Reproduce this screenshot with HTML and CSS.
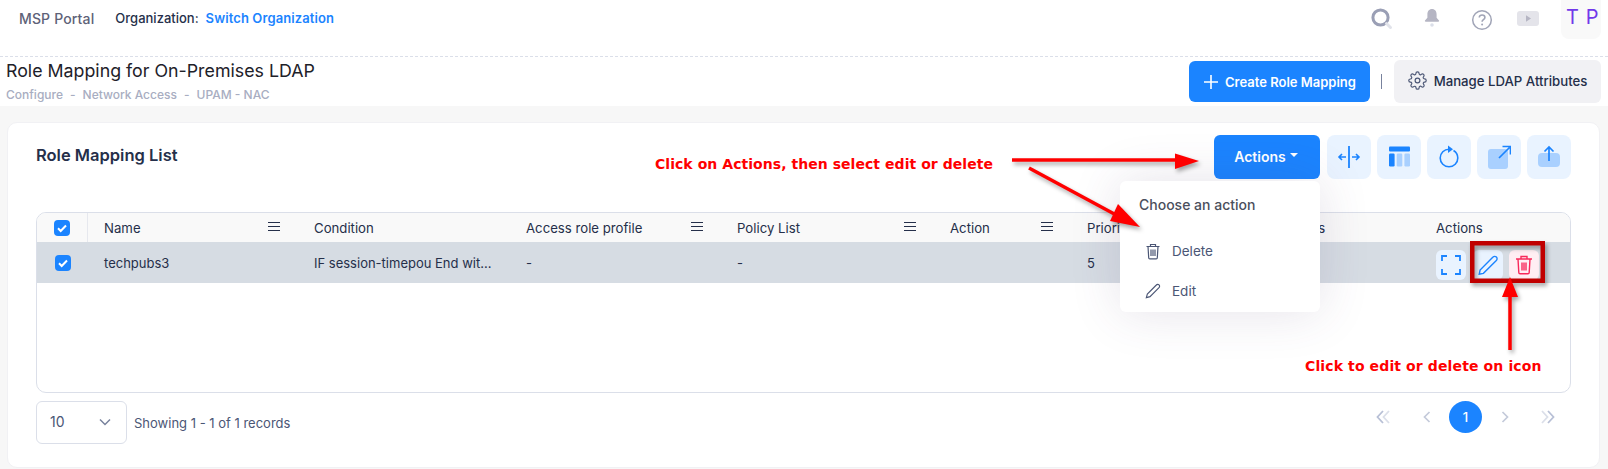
FILE: index.html
```html
<!DOCTYPE html>
<html lang="en">
<head>
<meta charset="utf-8">
<title>Role Mapping for On-Premises LDAP</title>
<link rel="stylesheet" href="styles.css">
</head>
<body>
<div class="page">
  <header class="topbar">
    <div class="topbar-left">
      <span class="brand">MSP Portal</span>
      <span class="org-label">Organization:</span>
      <a class="org-link">Switch Organization</a>
    </div>
    <div class="topbar-right">
      <svg class="ic-search" viewBox="0 0 24 24" width="24" height="24"><circle cx="10.5" cy="10.5" r="7.6" fill="none" stroke="#9a9fb5" stroke-width="3"/><path d="M16.5 16.5l4 4" stroke="#e1e3ea" stroke-width="3" stroke-linecap="round"/></svg>
      <svg class="ic-bell" viewBox="0 0 20 22" width="20" height="22"><path d="M10 2c-3 0-4.600 2.400-4.600 5.200v3.600L3 13.500c-.4.600 0 1.200.7 1.200h12.600c.7 0 1.100-.6.7-1.200l-2.400-2.700V7.200C14.600 4.400 13 2 10 2z" fill="#b5b5c3"/><circle cx="10" cy="18" r="1.800" fill="#dbdfe9"/></svg>
      <svg class="ic-help" viewBox="0 0 22 22" width="22" height="22"><circle cx="11" cy="11" r="9.300" fill="none" stroke="#a1a5b7" stroke-width="1.500"/><path d="M8.300 8.600c0-1.600 1.200-2.600 2.800-2.600s2.800 1 2.800 2.500c0 2.200-2.800 2.200-2.800 4.200" fill="none" stroke="#a1a5b7" stroke-width="1.600"/><circle cx="11.100" cy="15.600" r="1" fill="#a1a5b7"/></svg>
      <svg class="ic-video" viewBox="0 0 22 15" width="22" height="15"><rect width="22" height="15" rx="3" fill="#e4e4ea"/><path d="M9 4.200l5 3.300-5 3.300z" fill="#b5b5c3"/></svg>
      <div class="avatar">T P</div>
    </div>
  </header>

  <section class="subbar">
    <div class="subbar-title">
      <h1>Role Mapping for On-Premises LDAP</h1>
      <div class="crumbs"><span>Configure</span><span>-</span><span>Network Access</span><span>-</span><span>UPAM - NAC</span></div>
    </div>
    <div class="subbar-actions">
      <button class="btn-create"><svg viewBox="0 0 16 16" width="16" height="16"><path d="M8 1v14M1 8h14" stroke="#fff" stroke-width="1.600"/></svg>Create Role Mapping</button>
      <span class="sep"></span>
      <button class="btn-manage">
        <svg viewBox="0 0 24 24" width="19" height="19" fill="none" stroke="#4b5675" stroke-width="1.500"><path d="M12 15a3 3 0 1 0 0-6 3 3 0 0 0 0 6z"/><path d="M19.400 15a1.650 1.650 0 0 0 .33 1.820l.06.06a2 2 0 0 1 0 2.830 2 2 0 0 1-2.830 0l-.06-.06a1.650 1.650 0 0 0-1.820-.33 1.650 1.650 0 0 0-1 1.510V21a2 2 0 0 1-2 2 2 2 0 0 1-2-2v-.09A1.650 1.650 0 0 0 9 19.400a1.650 1.650 0 0 0-1.820.33l-.06.06a2 2 0 0 1-2.830 0 2 2 0 0 1 0-2.830l.06-.06a1.650 1.650 0 0 0 .33-1.820 1.650 1.650 0 0 0-1.510-1H3a2 2 0 0 1-2-2 2 2 0 0 1 2-2h.09A1.650 1.650 0 0 0 4.600 9a1.650 1.650 0 0 0-.33-1.820l-.06-.06a2 2 0 0 1 0-2.830 2 2 0 0 1 2.830 0l.06.06a1.650 1.650 0 0 0 1.820.33H9a1.650 1.650 0 0 0 1-1.510V3a2 2 0 0 1 2-2 2 2 0 0 1 2 2v.09a1.650 1.650 0 0 0 1 1.510 1.650 1.650 0 0 0 1.820-.33l.06-.06a2 2 0 0 1 2.830 0 2 2 0 0 1 0 2.830l-.06.06a1.650 1.650 0 0 0-.33 1.820V9a1.650 1.650 0 0 0 1.510 1H21a2 2 0 0 1 2 2 2 2 0 0 1-2 2h-.09a1.650 1.650 0 0 0-1.510 1z"/></svg>
        Manage LDAP Attributes
      </button>
    </div>
  </section>

  <main class="content">
    <section class="card">
      <div class="card-head">
        <h2>Role Mapping List</h2>
        <div class="toolbar">
          <div class="actions-wrap">
            <button class="btn-actions">Actions<span class="caret"></span></button>
            <div class="menu">
              <div class="menu-title">Choose an action</div>
              <div class="menu-item">
                <svg viewBox="0 0 16 17" width="16" height="17" fill="none" stroke="#4b5675" stroke-width="1.200"><path d="M1.500 3.500h13M5.500 3.500V1.500h5v2M3 3.500l.7 11.200c0 .7.500 1.100 1.100 1.100h6.400c.6 0 1.100-.4 1.100-1.100L13 3.500M6 6.500v6.500M8 6.500v6.500M10 6.500v6.500"/></svg>
                <span>Delete</span>
              </div>
              <div class="menu-item">
                <svg viewBox="0 0 24 24" width="16" height="16" fill="none" stroke="#4b5675" stroke-width="1.700"><path d="M17 3a2.830 2.830 0 1 1 4 4L7.500 20.500 2 22l1.500-5.500L17 3z"/></svg>
                <span>Edit</span>
              </div>
            </div>
          </div>
          <button class="tool">
            <svg viewBox="0 0 24 24" width="24" height="24" fill="none" stroke="#1b84ff" stroke-width="1.600"><path d="M12 1v22" stroke-width="1.800"/><path d="M9 12H2M5 9l-3 3 3 3M15 12h7M19 9l3 3-3 3"/></svg>
          </button>
          <button class="tool">
            <svg viewBox="0 0 24 24" width="24" height="24"><rect x="2" y="1.500" width="21" height="5" rx="1" fill="#1b84ff"/><rect x="2" y="8.500" width="5.600" height="13" rx="1.200" fill="#1b84ff"/><rect x="9.700" y="8.500" width="5.600" height="13" rx="1.200" fill="#a9d0ff"/><rect x="17.400" y="8.500" width="5.600" height="13" rx="1.200" fill="#a9d0ff"/></svg>
          </button>
          <button class="tool">
            <svg viewBox="0 0 24 24" width="24" height="24" fill="none" stroke="#1b84ff" stroke-width="1.600"><path d="M12 4.200A8.800 8.800 0 1 0 20.800 13 8.800 8.800 0 0 0 16.500 5.500"/><path d="M11 0.500l5 3.700-5 3.700z" fill="#1b84ff" stroke="none"/></svg>
          </button>
          <button class="tool">
            <svg viewBox="0 0 24 24" width="24" height="24" fill="none"><rect x="1" y="4" width="20" height="20" rx="3" fill="#a9d0ff"/><path d="M12 13L22.500 2.500M15.500 1.500H23.500V9.500" stroke="#1b84ff" stroke-width="1.700"/></svg>
          </button>
          <button class="tool">
            <svg viewBox="0 0 24 24" width="24" height="24" fill="none"><rect x="1" y="8" width="22" height="14" rx="4" fill="#a9d0ff"/><path d="M12 16V2M7.500 6.500L12 2l4.500 4.500" stroke="#1b84ff" stroke-width="1.700"/></svg>
          </button>
        </div>
      </div>

      <div class="table">
        <div class="row row-head">
          <div class="cell cell-check"><span class="check"><svg viewBox="0 0 16 16" width="16" height="16"><path d="M4 8.300l2.700 2.700L12 5.500" fill="none" stroke="#fff" stroke-width="2"/></svg></span></div>
          <div class="cell"><span>Name</span><i class="menu-ic"></i></div>
          <div class="cell"><span>Condition</span></div>
          <div class="cell"><span>Access role profile</span><i class="menu-ic"></i></div>
          <div class="cell"><span>Policy List</span><i class="menu-ic"></i></div>
          <div class="cell"><span>Action</span><i class="menu-ic"></i></div>
          <div class="cell"><span>Priority</span></div>
          <div class="cell"><span>Attributes</span></div>
          <div class="cell"><span>Actions</span></div>
        </div>
        <div class="row row-sel">
          <div class="cell cell-check"><span class="check"><svg viewBox="0 0 16 16" width="16" height="16"><path d="M4 8.300l2.700 2.700L12 5.500" fill="none" stroke="#fff" stroke-width="2"/></svg></span></div>
          <div class="cell"><span>techpubs3</span></div>
          <div class="cell"><span>IF session-timepou End wit...</span></div>
          <div class="cell"><span>-</span></div>
          <div class="cell"><span>-</span></div>
          <div class="cell"></div>
          <div class="cell"><span>5</span></div>
          <div class="cell"></div>
          <div class="cell cell-actions">
            <span class="row-btn row-btn-blue"><svg viewBox="0 0 20 20" width="20" height="20" fill="none" stroke="#1b84ff" stroke-width="1.800"><path d="M1 6V1h5M14 1h5v5M19 14v5h-5M6 19H1v-5"/></svg></span>
            <span class="row-btn row-btn-blue"><svg viewBox="0 0 24 24" width="20" height="20" fill="none" stroke="#1b84ff" stroke-width="1.700"><path d="M18 2.500a2.830 2.830 0 1 1 4 4L6.500 22 1.500 23l1-5L18 2.500z"/></svg></span>
            <span class="row-btn row-btn-red"><svg viewBox="0 0 18 20" width="18" height="20" fill="none" stroke="#f8285a" stroke-width="1.400"><path d="M1 4h16M6 4V1.500h6V4M3 4l.8 13.500c0 .8.600 1.300 1.300 1.300h7.800c.7 0 1.300-.5 1.300-1.300L15 4M7 7.500v8M9 7.500v8M11 7.500v8"/></svg></span>
          </div>
        </div>
      </div>

      <div class="card-foot">
        <div class="foot-left">
          <div class="select"><span>10</span><svg viewBox="0 0 12 8" width="12" height="8"><path d="M1 1.500l5 5 5-5" fill="none" stroke="#78829d" stroke-width="1.500"/></svg></div>
          <span class="records">Showing 1 - 1 of 1 records</span>
        </div>
        <div class="pager">
          <span class="pg pg-wide"><svg viewBox="0 0 16 14" width="16" height="14" fill="none" stroke-width="1.800"><path d="M7 1L1.500 7 7 13" stroke="#b8c0d6"/><path d="M13 1L7.500 7 13 13" stroke="#dbdfe9"/></svg></span>
          <span class="pg"><svg viewBox="0 0 8 12" width="8" height="12" fill="none" stroke="#c4cada" stroke-width="1.700"><path d="M6.500 1L1.500 6l5 5"/></svg></span>
          <span class="pg pg-on">1</span>
          <span class="pg"><svg viewBox="0 0 8 12" width="8" height="12" fill="none" stroke="#c4cada" stroke-width="1.700"><path d="M1.500 1l5 5-5 5"/></svg></span>
          <span class="pg pg-wide"><svg viewBox="0 0 16 14" width="16" height="14" fill="none" stroke-width="1.800"><path d="M3 1l5.500 6L3 13" stroke="#dbdfe9"/><path d="M9 1l5.500 6L9 13" stroke="#b8c0d6"/></svg></span>
        </div>
      </div>
    </section>
  </main>

  <div class="note note-actions">Click on Actions, then select edit or delete</div>
  <div class="note note-icon">Click to edit or delete on icon</div>
  <svg class="annot" viewBox="0 0 1608 469" width="1608" height="469">
    <g class="annot-shadow">
      <rect x="1472.250" y="243.250" width="70.500" height="37.500" fill="none" stroke="#c00000" stroke-width="4.500"/>
      <path d="M1012 160H1178" stroke="#f00" stroke-width="3.500"/>
      <path d="M1175 153.500L1199 161 1175 169z" fill="#f00"/>
      <path d="M1029 168L1118 216" stroke="#f00" stroke-width="3.500"/>
      <path d="M1140 227L1110 221 1118 204z" fill="#f00"/>
      <path d="M1510 350V296" stroke="#f00" stroke-width="3.500"/>
      <path d="M1510 277L1518 297 1502 297z" fill="#f00"/>
    </g>
  </svg>
</div>
</body>
</html>
```
FILE: styles.css
```css
* { box-sizing: border-box; }
html, body { margin: 0; padding: 0; }
body { font-family: Inter, "Liberation Sans", sans-serif; background: #f7f7f7; color: #252f4a; }
button { font-family: inherit; border: 0; cursor: pointer; }
h1, h2 { margin: 0; }

.page { position: relative; width: 1608px; height: 469px; overflow: hidden; display: flex; flex-direction: column; }

.topbar { height: 57px; flex: none; background: #fff; border-bottom: 1px dashed #dbdfe9; display: flex; justify-content: space-between; align-items: flex-start; }
.topbar-left { display: flex; align-items: center; height: 36px; padding-left: 19px; font-size: 13px; font-weight: 500; }
.brand { color: #5e6278; margin-right: 21px; font-size: 14px; letter-spacing: .15px; }
.org-label { color: #252f4a; margin-right: 7px; }
.org-link { color: #1b84ff; font-weight: 600; letter-spacing: .1px; }
.topbar-right { display: flex; align-items: center; height: 39px; padding-right: 7px; }
.ic-search { margin-right: 28px; margin-top: -1px; }
.ic-bell { margin-right: 29px; margin-top: -3px; }
.ic-help { margin-right: 24px; }
.ic-video { margin-right: 22px; margin-top: -2px; }
.avatar { width: 40px; height: 39px; background: #f9f9f9; border-radius: 0 0 8px 8px; color: #7239ea; font-size: 20px; letter-spacing: .5px; display: flex; align-items: center; justify-content: center; padding: 0 0 5px 3px; white-space: nowrap; }

.subbar { height: 49px; flex: none; background: #fff; display: flex; justify-content: space-between; align-items: flex-start; padding: 3px 7px 0 6px; }
.subbar-title h1 { font-size: 17.800px; font-weight: 400; line-height: 22px; color: #1e2129; }
.crumbs { display: flex; gap: 7px; font-size: 12px; font-weight: 500; color: #a8adc1; line-height: 15px; margin-top: 5px; }
.subbar-actions { display: flex; align-items: center; }
.btn-create { width: 181px; height: 41px; background: #1b84ff; color: #fff; border-radius: 6px; font-size: 13px; font-weight: 600; display: flex; align-items: center; justify-content: center; gap: 6px; padding: 0; }
.sep { width: 1px; height: 15px; background: #78829d; margin: 0 12px 0 11px; }
.btn-manage { width: 207px; height: 43px; background: #f1f1f4; color: #252f4a; border-radius: 6px; font-size: 13.200px; font-weight: 500; display: flex; align-items: center; justify-content: center; gap: 7px; padding: 0 0 2px 0; }

.content { flex: 1; padding: 16px 8px 1px 7px; min-height: 0; }
.card { height: 346px; background: #fff; border: 1px solid #f1f1f4; border-radius: 10px; padding: 12px 28px 0 28px; }
.card-head { display: flex; justify-content: space-between; align-items: flex-start; height: 44px; }
.card-head h2 { font-size: 16.500px; font-weight: 600; color: #252f4a; line-height: 20px; margin-top: 10px; }
.toolbar { display: flex; gap: 6px; }
.actions-wrap { position: relative; margin-right: 1px; }
.btn-actions { width: 106px; height: 44px; background: #1b84ff; color: #fff; font-size: 14px; font-weight: 600; border-radius: 6px; display: flex; align-items: center; justify-content: center; gap: 4px; padding: 0 2px 2px 0; }
.caret { width: 0; height: 0; border-left: 4px solid transparent; border-right: 4px solid transparent; border-top: 4px solid #fff; margin-top: -2px; }
.tool { width: 44px; height: 44px; background: #e9f3ff; border-radius: 8px; display: flex; align-items: center; justify-content: center; padding: 0; }

.menu { position: absolute; z-index: 3; top: 46px; right: 0; width: 200px; height: 131px; background: #fff; border-radius: 6px; box-shadow: 0 0 50px 0 rgba(82, 63, 105, .15); padding: 15px 0 0 19px; }
.menu-title { font-size: 14px; font-weight: 500; color: #4b4f5c; line-height: 18px; height: 35px; }
.menu-item { height: 40px; display: flex; align-items: center; gap: 11px; padding-left: 6px; font-size: 13.500px; color: #4b5675; }

.table { height: 181px; margin-top: 33px; border: 1px solid #dbdfe9; border-radius: 10px; overflow: hidden; font-size: 13px; color: #252f4a; }
.row { display: grid; grid-template-columns: 51px 210px 212px 211px 213px 137px 178px 171px 150px; }
.row-head { height: 29px; background: #f9f9f9; font-size: 13.200px; }
.row-sel { height: 41px; background: #d6dce3; }
.cell { display: flex; align-items: center; justify-content: space-between; padding: 0 18px 0 16px; white-space: nowrap; min-width: 0; }
.cell-check { padding: 0; justify-content: center; }
.row-head .cell-check { border-right: 1px solid #e6e8ee; }
.check { width: 16px; height: 16px; background: #1b84ff; border-radius: 4px; display: block; }
.check svg { display: block; }
.menu-ic { width: 12px; height: 9px; border-top: 1px solid #252f4a; border-bottom: 1px solid #252f4a; position: relative; display: block; margin-top: -3px; }
.menu-ic::after { content: ""; position: absolute; left: 0; right: 0; top: 3px; height: 1px; background: #252f4a; }
.cell-actions { justify-content: flex-start; gap: 6.500px; padding: 5px 0 0 16px; }
.row-btn { width: 30px; height: 30px; border-radius: 6px; display: flex; align-items: center; justify-content: center; }
.row-btn-blue { background: #e9f3ff; }
.row-btn-red { background: #ffeef3; }

.card-foot { display: flex; justify-content: space-between; align-items: flex-start; margin-top: 8px; }
.foot-left { display: flex; align-items: center; gap: 7px; }
.select { width: 91px; height: 43px; border: 1px solid #dbdfe9; border-radius: 6px; display: flex; align-items: center; justify-content: space-between; padding: 0 15px 2px 13px; font-size: 14px; color: #4b5675; }
.records { font-size: 13px; color: #4b5675; }
.pager { display: flex; gap: 6.500px; padding-right: 4px; }
.pg { width: 32px; height: 32px; display: flex; align-items: center; justify-content: center; }
.pg-wide { width: 40px; }
.pg-on { width: 33px; background: #1b84ff; color: #fff; border-radius: 50%; font-size: 13px; font-weight: 500; }

.note { position: absolute; z-index: 4; font-family: "DejaVu Sans", sans-serif; font-weight: 700; font-size: 14px; letter-spacing: .05px; color: #f00; white-space: nowrap; line-height: 16px; }
.note-actions { left: 655px; top: 156px; }
.note-icon { left: 1305px; top: 358px; letter-spacing: .12px; }
.annot { position: absolute; z-index: 5; left: 0; top: 0; pointer-events: none; }
.annot-shadow { filter: drop-shadow(2px 3px 2px rgba(0, 0, 0, .35)); }
```
